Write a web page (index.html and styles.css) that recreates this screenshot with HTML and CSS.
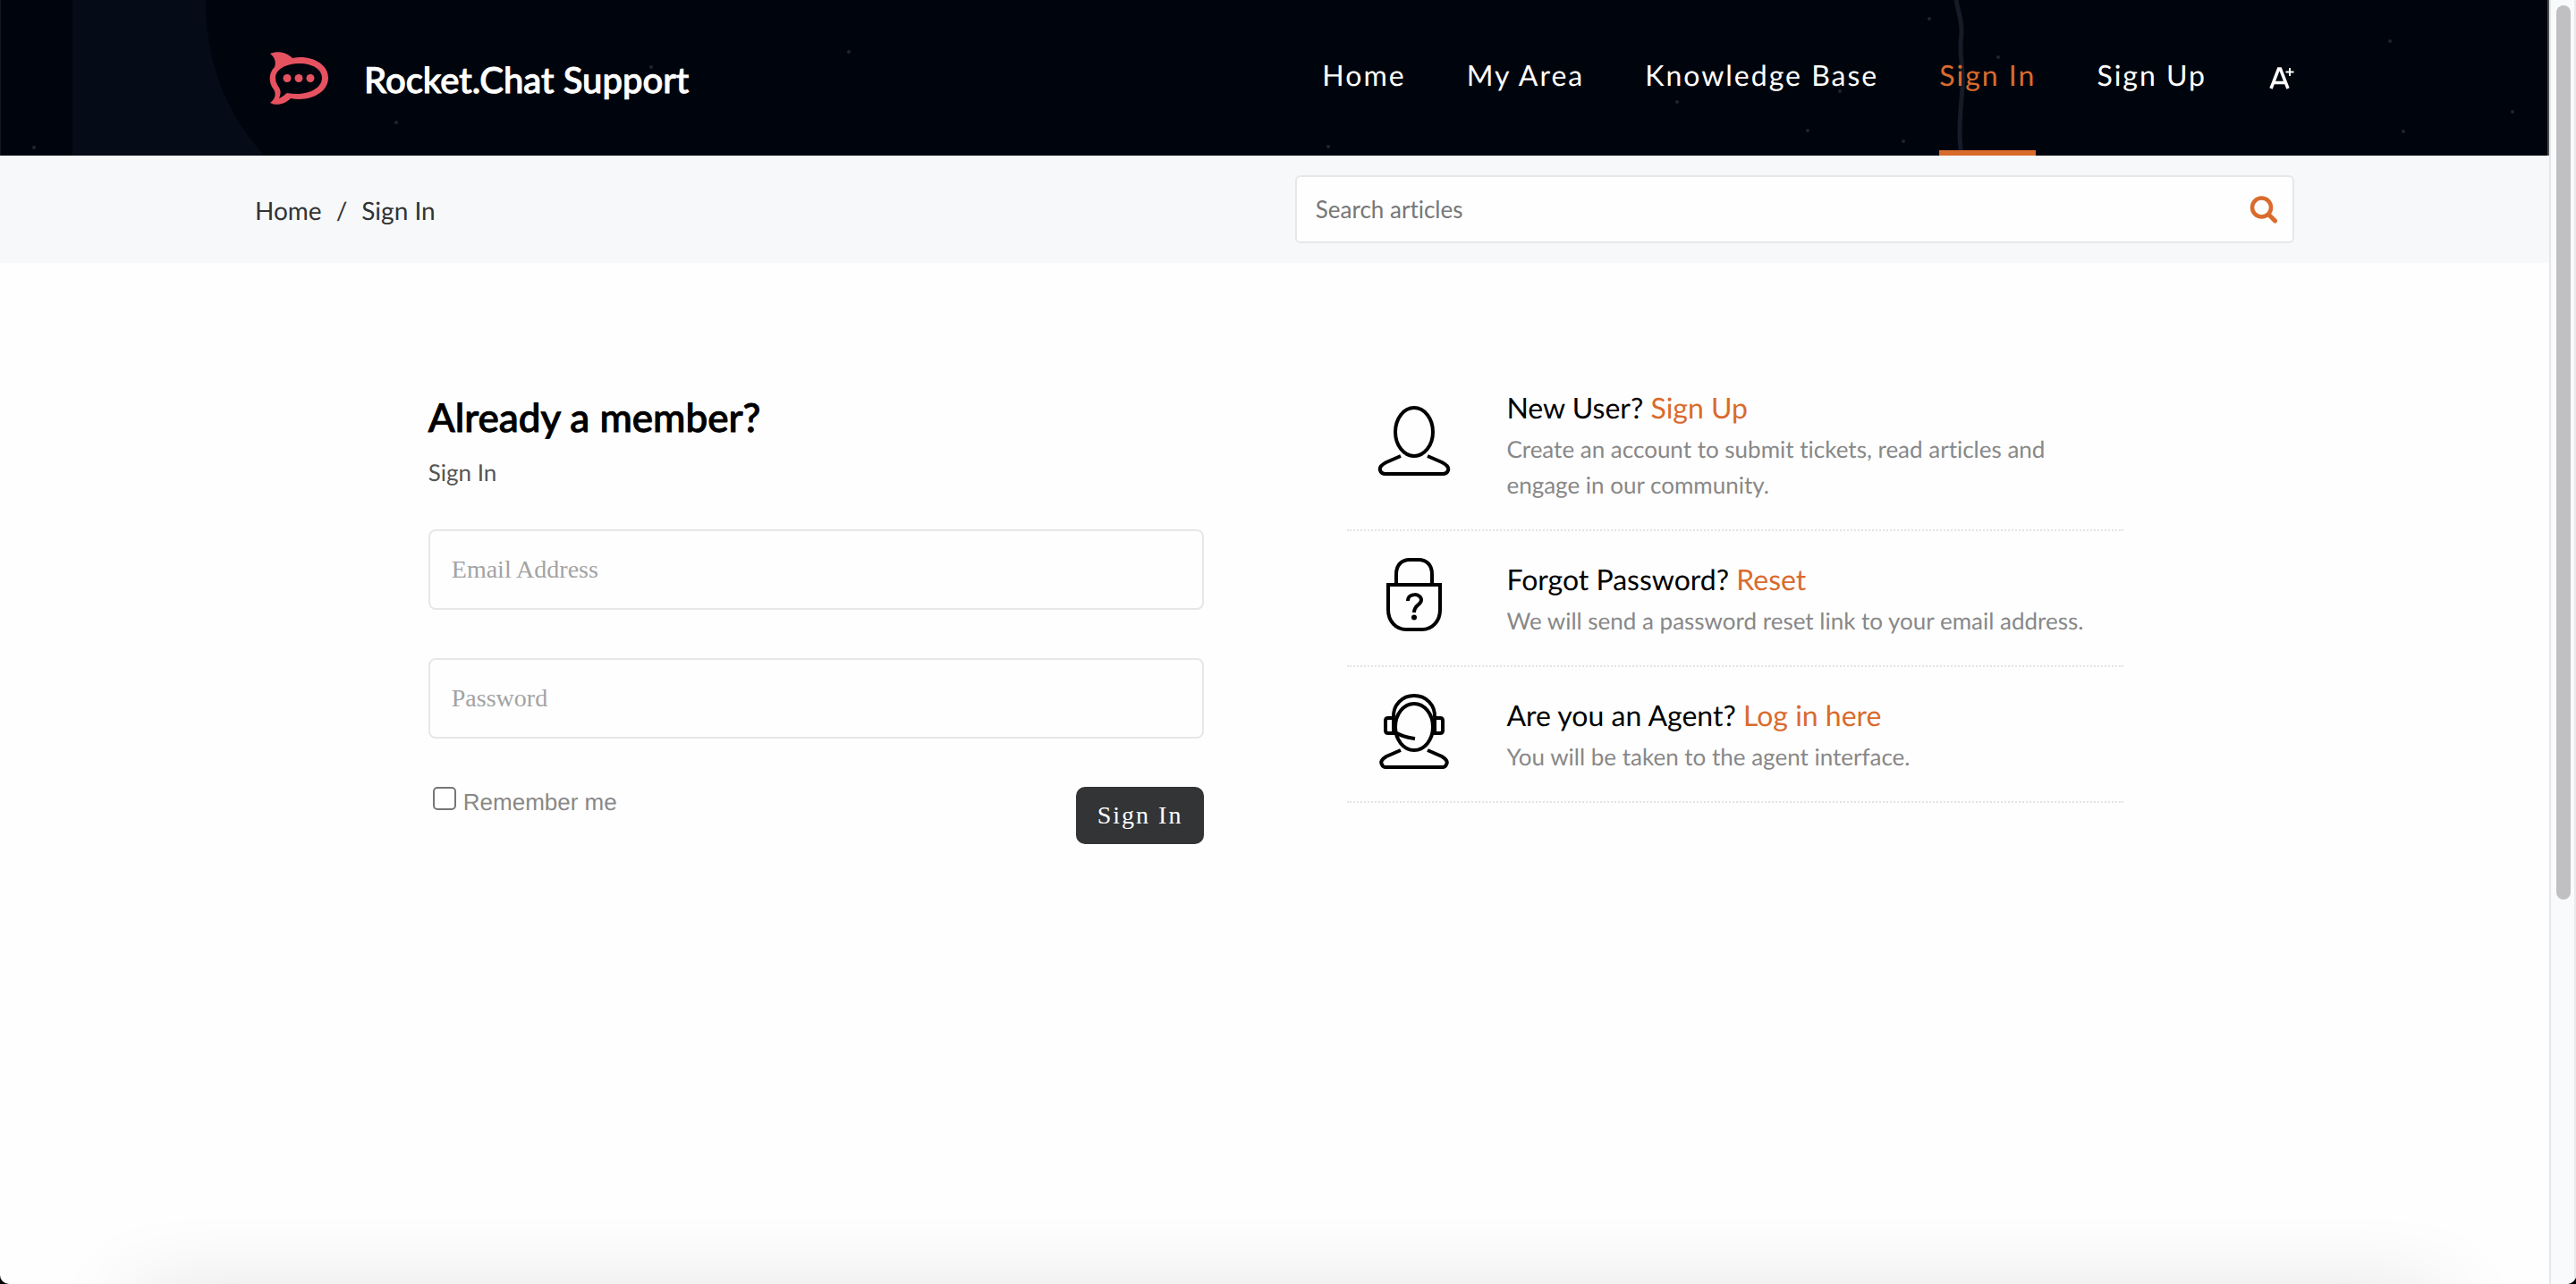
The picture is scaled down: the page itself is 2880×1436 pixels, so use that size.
FILE: index.html
```html
<!DOCTYPE html>
<html lang="en">
<head>
<meta charset="utf-8">
<title>Sign In - Rocket.Chat Support</title>
<link rel="stylesheet" href="styles.css">
</head>
<body>
<div class="page">
  <header class="header">
    <svg class="sky sky-left" viewBox="0 0 1000 174" aria-hidden="true">
      <path d="M81 0H230C230 65 250 125 296 174H81Z" fill="#050b17"/>
      <path d="M0 0H1V174H0Z" fill="#15191f"/>
      <g fill="#20252d"><circle cx="38" cy="165" r="2"/><circle cx="443" cy="137" r="2"/><circle cx="728" cy="75" r="2"/><circle cx="949" cy="58" r="2"/></g>
    </svg>
    <svg class="sky sky-right" viewBox="0 0 1500 174" aria-hidden="true">
      <path d="M837 0C840 18 845 24 842 48C841 68 846 78 844 98C842 124 839 150 843 174" fill="none" stroke="#151b27" stroke-width="5"/>
      <g fill="#20252d"><circle cx="135" cy="164" r="2"/><circle cx="525" cy="114" r="2"/><circle cx="671" cy="146" r="2"/><circle cx="707" cy="102" r="2"/><circle cx="807" cy="21" r="2"/><circle cx="778" cy="158" r="2"/><circle cx="884" cy="64" r="2"/><circle cx="1322" cy="46" r="2"/><circle cx="1337" cy="147" r="2"/><circle cx="1459" cy="125" r="2"/></g>
      <path d="M1498 0H1500V174H1498Z" fill="#4b4e53"/>
    </svg>
    <a class="brand" href="#">
      <svg class="logo" viewBox="0 0 68 60" aria-hidden="true">
        <path fill="#e65260" fill-rule="evenodd" d="M1 2C10-2 20 1 26 7C46 3 66 13 66 29C66 46 45 56 24 52C18 58 9 61 1 57C7 52 8 47 5 42C-1 34-1 24 6 17C8 11 6 6 1 2ZM34 13C18 13 7 20 7 29C7 34 9 37 11 40C14 45 12 49 11 52C16 50 18 47 20 46C40 50 59 42 59 29C59 20 49 13 34 13Z"/>
        <g fill="#e65260"><circle cx="20" cy="29.500" r="4.500"/><circle cx="33" cy="29.500" r="4.500"/><circle cx="46" cy="29.500" r="4.500"/></g>
      </svg>
      <span class="brand-name">Rocket.Chat Support</span>
    </a>
    <nav class="nav">
      <a class="nav-link" href="#">Home</a>
      <a class="nav-link" href="#">My Area</a>
      <a class="nav-link" href="#">Knowledge Base</a>
      <a class="nav-link active" href="#" aria-current="page">Sign In</a>
      <a class="nav-link" href="#">Sign Up</a>
      <button class="text-size" type="button" aria-label="Increase text size">
        <svg viewBox="0 0 30 28" aria-hidden="true"><path d="M4 26L12.500 4H14.500L23 26M7.500 19.500H19.500" fill="none" stroke="#fff" stroke-width="3.500"/><path d="M25 3V12M20.500 7.500H29.500" stroke="#fff" stroke-width="2"/></svg>
      </button>
    </nav>
  </header>

  <div class="subbar">
    <nav class="crumbs" aria-label="Breadcrumb"><a href="#">Home</a><span>/</span><span>Sign In</span></nav>
    <form class="search">
      <input type="search" placeholder="Search articles" aria-label="Search articles">
      <button type="submit" aria-label="Search">
        <svg viewBox="0 0 32 32" aria-hidden="true"><circle cx="13.500" cy="14" r="10.500" fill="none" stroke="#d96b2d" stroke-width="4.500"/><path d="M21.500 22L28.500 29" stroke="#d96b2d" stroke-width="5" stroke-linecap="round"/></svg>
      </button>
    </form>
  </div>

  <main class="main">
    <form class="login">
      <h1>Already a member?</h1>
      <p class="login-sub">Sign In</p>
      <input class="field" type="email" placeholder="Email Address" aria-label="Email Address">
      <input class="field" type="password" placeholder="Password" aria-label="Password">
      <div class="login-foot">
        <label class="remember"><input type="checkbox"><span>Remember me</span></label>
        <button class="submit" type="submit">Sign In</button>
      </div>
    </form>

    <ul class="options">
      <li class="option">
        <svg class="option-icon" viewBox="0 0 84 84" aria-hidden="true"><g fill="none" stroke="#000" stroke-width="4"><ellipse cx="42" cy="31" rx="21" ry="27"/><path d="M27 58L11 65C5 68 3 71 4 74C5 77 7 78 10 78H74C77 78 79 77 80 74C81 71 79 68 73 65L57 58"/></g></svg>
        <div>
          <h2>New User? <a href="#">Sign Up</a></h2>
          <p>Create an account to submit tickets, read articles and engage in our community.</p>
        </div>
      </li>
      <li class="option">
        <svg class="option-icon" viewBox="0 0 84 84" aria-hidden="true"><g fill="none" stroke="#000" stroke-width="4"><path d="M22 29V18C22 8 28 2 37 2H47C56 2 62 8 62 18V29"/><path d="M13 30H71V58C71 71 62 80 51 80H33C22 80 13 71 13 58Z"/><path d="M35 48C35 39 50 39 50 47C50 53 42 52 42 61"/></g><circle cx="42" cy="66.500" r="3"/></svg>
        <div>
          <h2>Forgot Password? <a href="#">Reset</a></h2>
          <p>We will send a password reset link to your email address.</p>
        </div>
      </li>
      <li class="option">
        <svg class="option-icon" viewBox="0 0 84 84" aria-hidden="true"><g fill="none" stroke="#000" stroke-width="4"><ellipse cx="42" cy="37" rx="21" ry="26"/><path d="M19 27C18 12 29 2 42 2C55 2 66 12 65 27M20 27H13C11 27 10 28 10 30V41C10 43 11 44 13 44H21M64 27H71C73 27 74 28 74 30V41C74 43 73 44 71 44H63M19 27V44M65 27V44M21 43C28 48 36 49 43 50"/><path d="M27 63L11 70C6 73 4 76 6 79C7 82 9 82 12 82H72C75 82 77 82 78 79C80 76 78 73 73 70L57 63"/></g></svg>
        <div>
          <h2>Are you an Agent? <a href="#">Log in here</a></h2>
          <p>You will be taken to the agent interface.</p>
        </div>
      </li>
    </ul>
  </main>
  <div class="edge-shadow"></div>
</div>
<div class="scrollbar" aria-hidden="true"><div class="thumb"></div></div>
</body>
</html>
```
FILE: styles.css
```css
* { box-sizing: border-box; }
html { background: #000; }
body {
  margin: 0;
  display: flex;
  min-height: 100vh;
  font-family: Lato, "Liberation Sans", sans-serif;
  font-variant-ligatures: none;
  text-rendering: geometricPrecision;
  background: #fefefe;
  border-radius: 0 0 10px 10px;
  overflow: hidden;
}
a { color: inherit; text-decoration: none; }
button { border: 0; padding: 0; background: none; cursor: pointer; }
h1, h2, p, ul { margin: 0; padding: 0; }

.page { flex: 1; position: relative; overflow: hidden; }

.header {
  position: relative;
  display: flex;
  justify-content: space-between;
  height: 174px;
  padding: 0 10%;
  background: #00050d;
  color: #fff;
}
.sky { position: absolute; top: 0; height: 174px; }
.sky-left { left: 0; }
.sky-right { right: 0; }
.brand { position: relative; display: flex; align-items: center; gap: 38px; padding: 2px 0 0 16px; }
.logo { width: 68px; height: 60px; }
.brand-name { font-size: 40px; font-weight: 500; line-height: 52px; padding-top: 2px; -webkit-text-stroke: 1px #fff; }
.nav { position: relative; display: flex; gap: 68px; }
.nav-link {
  font-size: 32px;
  line-height: 168px;
  letter-spacing: 2px;
}
.active { color: #d96b2d; border-bottom: 6px solid #d96b2d; }
.text-size svg { display: block; width: 30px; height: 28px; }

.subbar {
  display: flex;
  align-items: center;
  justify-content: space-between;
  height: 120px;
  padding: 0 10%;
  background: #f7f8fa;
}
.crumbs { display: flex; gap: 16px; padding-top: 2px; font-size: 28px; color: #333; }
.search {
  display: flex;
  align-items: center;
  width: 49%;
  height: 76px;
  padding: 0 16px 0 21px;
  border: 2px solid #e6e7e8;
  border-radius: 6px;
  background: #fefefe;
}
.search input {
  flex: 1;
  border: 0;
  padding: 0;
  background: none;
  font: 26px Lato, sans-serif;
  font-variant-ligatures: none;
  outline: 0;
}
.search input::placeholder { color: #777; }
.search svg { display: block; width: 32px; height: 32px; }

.main {
  display: grid;
  grid-template-columns: 1fr 1fr;
  gap: 160px;
  padding: 130px 16.7% 0 16.8%;
}
.login { padding-top: 17px; }
.login h1 { font-size: 44px; line-height: 52px; font-weight: 500; color: #000; -webkit-text-stroke: 1px #000; }
.login-sub { margin-top: 19px; font-size: 26px; line-height: 32px; color: #555; }
.field {
  display: block;
  width: 100%;
  height: 90px;
  margin: 48px 0 54px;
  padding: 0 24px;
  border: 2px solid #e6e7e8;
  border-radius: 8px;
  background: #fefefe;
  font: 28px "Liberation Serif", serif;
}
.field::placeholder { color: #a3a3a3; }
.field + .field { margin-top: 0; }
.login-foot { display: flex; justify-content: space-between; align-items: flex-start; }
.remember {
  display: flex;
  gap: 8px;
  padding-left: 5px;
  font: 26px "Liberation Sans", sans-serif;
  line-height: 34px;
  color: #888;
}
.remember input {
  appearance: none;
  width: 26px;
  height: 26px;
  margin: 0;
  border: 2px solid #767676;
  border-radius: 5px;
  background: #fff;
}
.submit {
  height: 64px;
  padding: 0 24px;
  border-radius: 10px;
  background: #333436;
  color: #fff;
  font: 28px "Liberation Serif", serif;
  letter-spacing: 2px;
}

.options { list-style: none; }
.option {
  display: flex;
  align-items: flex-start;
  gap: 61px;
  height: 152px;
  padding: 30px 28px 0 33px;
  border-bottom: 2px dotted #e2e3e4;
}
.option:first-child { height: 170px; padding-top: 8px; }
.option-icon { flex: none; width: 84px; height: 84px; }
.option:first-child .option-icon { margin-top: 20px; }
.option h2 { font-size: 32px; line-height: 48px; font-weight: 400; color: #000; }
.option h2 a { color: #d96b2d; }
.option p { padding-top: 2px; font-size: 26px; line-height: 40px; color: #888; }

.edge-shadow {
  position: fixed;
  left: 160px;
  right: 160px;
  bottom: -70px;
  height: 40px;
  box-shadow: 0 0 100px 10px #0000002a;
}
.scrollbar {
  width: 30px;
  padding: 6px 4px 0 6px;
  border-left: 2px solid #e6e7e9;
  border-right: 2px solid #e9eaec;
  background: #f9fafc;
}
.thumb { height: 1000px; width: 16px; border-radius: 8px; background: #c0c0c2; }
```
